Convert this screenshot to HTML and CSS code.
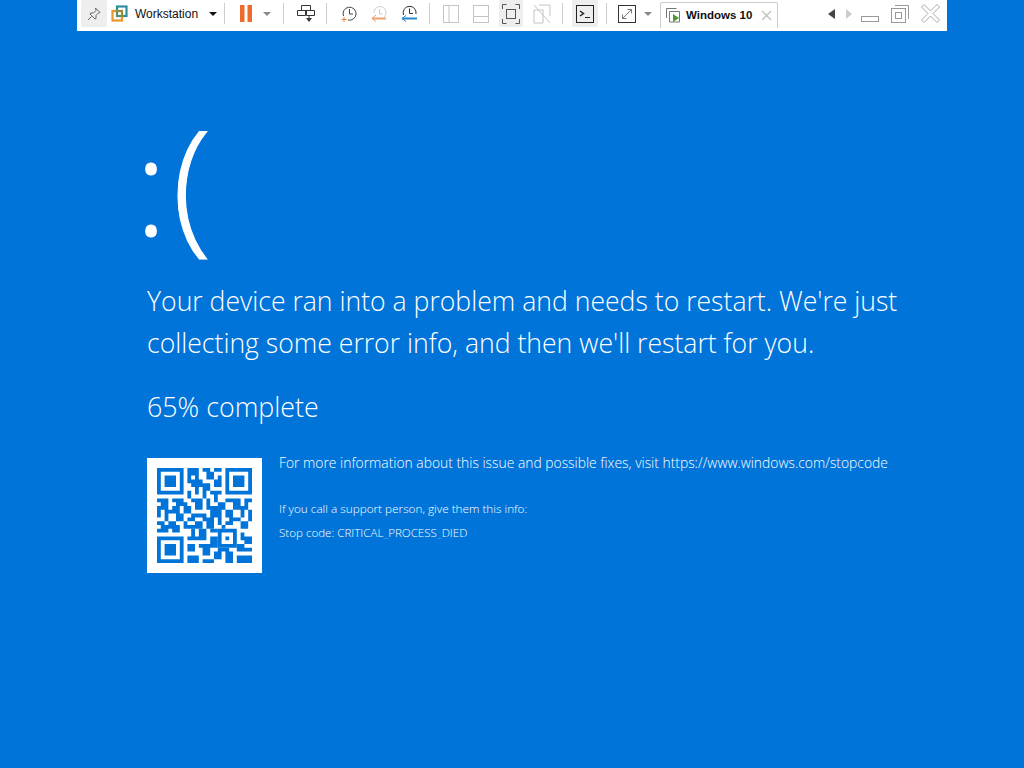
FILE: index.html
```html
<!DOCTYPE html>
<html lang="en">
<head>
<meta charset="UTF-8">
<meta name="viewport" content="width=device-width, initial-scale=1.0">
<title>Windows 10</title>
<link rel="stylesheet" href="styles.css">
</head>
<body>
    <header class="toolbar">
        <span class="pin-btn">
            <svg width="16" height="16" viewBox="0 0 16 16" fill="none" stroke="#666"><path d="M9.5 2l4.500 4.500-1.500.5-2.500 2.500v3l-1 .5-5-5 .5-1h3l2.500-2.500z"/><path d="M5.500 10.500l-3.500 3.500"/></svg>
        </span>
        <svg class="logo" width="17" height="17" viewBox="0 0 17 17" fill="none" stroke-width="2.200"><rect x="6" y="1.500" width="9.500" height="9.500" stroke="#2f8f9f"/><rect x="1.500" y="6" width="9.500" height="9.500" stroke="#e8972e"/><rect x="6" y="6" width="5" height="5" stroke="#6f8f4f" stroke-width="1.500"/></svg>
        <span class="label">Workstation</span>
        <i class="caret dark label-caret"></i>
        <i class="sep first-sep"></i>
        <svg class="pause" width="12" height="17" viewBox="0 0 12 17" fill="#ee6c2b"><rect width="4.500" height="17"/><rect x="7.500" width="4.500" height="17"/></svg>
        <i class="caret pause-caret"></i>
        <i class="sep"></i>
        <svg class="icon wide" width="18" height="20" viewBox="0 0 18 20" fill="none" stroke="#333"><path d="M4.500 1.500h9v5h-9zM.5 6.500h8v5h-8zM9.500 6.500h8v5h-8z" fill="#fff"/><path d="M12 12v2" /><path d="M9 14h6l-3 4z" fill="#333" stroke="none"/></svg>
        <i class="sep"></i>
        <div class="group clocks">
            <svg class="icon" width="17" height="18" viewBox="0 0 17 18" fill="none" stroke="#444"><path d="M3.500 11A6.500 6.500 0 1 1 8 15"/><path d="M9.500 4v5h3.500"/><path d="M4 12v5M1.500 14.500h5" stroke="#e8803a"/></svg>
            <svg class="icon" width="17" height="18" viewBox="0 0 17 18" fill="none" stroke="#ccc"><path d="M3 8a6 6 0 1 1 10 4"/><path d="M8.500 4v5h3"/><path d="M1 13.500h14" stroke="#f0a070" stroke-width="2"/><path d="M5 10l-4 3.500 4 3" stroke="#f0a070"/></svg>
            <svg class="icon" width="17" height="18" viewBox="0 0 17 18" fill="none" stroke="#333"><path d="M2.500 10A6.500 6.500 0 1 1 15 9"/><path d="M8.500 3.500v5h3.500"/><path d="M1 13.500h15" stroke="#2a86c8" stroke-width="2"/><path d="M5 10.500l-4 3 4 3" stroke="#2a86c8"/></svg>
        </div>
        <i class="sep"></i>
        <div class="group">
            <svg class="icon" width="16" height="18" viewBox="0 0 16 18" fill="none" stroke="#c4c4c4"><rect x=".5" y=".5" width="15" height="17"/><path d="M6 .5v17"/></svg>
            <svg class="icon" width="16" height="18" viewBox="0 0 16 18" fill="none" stroke="#c4c4c4"><rect x=".5" y=".5" width="15" height="17"/><path d="M.5 11.500h15"/></svg>
            <span class="icon-btn focus-btn">
                <svg width="18" height="20" viewBox="0 0 18 20" fill="none" stroke="#555"><rect x="4.500" y="5.500" width="9" height="9"/><path d="M.5 5V.5h4M13.500.5h4V5M17.500 15v4.500h-4M4.500 19.500h-4V15"/></svg>
            </span>
            <svg class="icon" width="18" height="20" viewBox="0 0 18 20" fill="none" stroke="#c4c4c4"><path d="M6 1h11v11M1 6h9v13H1zM1 1l16 18"/></svg>
        </div>
        <i class="sep"></i>
        <span class="icon-btn term-btn">
            <svg width="18" height="18" viewBox="0 0 18 18" fill="none" stroke="#222"><rect x=".5" y=".5" width="17" height="17"/><path d="M4 6l3.500 2.500L4 11" stroke-width="1.500"/><path d="M9 12.500h5"/></svg>
        </span>
        <i class="sep term-sep"></i>
        <svg class="icon wide" width="18" height="18" viewBox="0 0 18 18" fill="none" stroke="#333"><rect x=".5" y=".5" width="17" height="17"/><path d="M4.500 13.500l9-9M9.500 4.500h4v4M4.500 9.500v4h4" stroke="#777"/></svg>
        <i class="caret full-caret"></i>
        <div class="tab">
            <svg width="15" height="15" viewBox="0 0 15 15" fill="none" stroke="#777"><path d="M.5 10V.5h10"/><path d="M3.500 14V3.500h10V14z" fill="#fff"/><path d="M7 6l6 4-6 4z" fill="#4e9a2e" stroke="none"/></svg>
            <b class="tab-name">Windows 10</b>
            <svg class="tab-close" width="11" height="11" viewBox="0 0 11 11" stroke="#c4c4c4" stroke-width="1.500"><path d="M1 1l9 9M10 1l-9 9"/></svg>
        </div>
        <div class="tab-nav">
            <i class="arrow left"></i>
            <i class="arrow right"></i>
        </div>
        <div class="win-btns">
            <svg width="18" height="6" viewBox="0 0 18 6" fill="none" stroke="#999" class="min-btn"><rect x=".5" y=".5" width="17" height="5"/></svg>
            <svg width="18" height="18" viewBox="0 0 18 18" fill="none" stroke="#999"><path d="M4 .5h13.500V14"/><rect x=".5" y="3.500" width="14" height="14"/><rect x="4.500" y="7.500" width="6" height="6"/></svg>
            <svg width="19" height="19" viewBox="0 0 19 19" fill="#fff" stroke="#aaa"><path d="M.5 3L3 .5l6.500 6.500L16 .5 18.500 3 12 9.500l6.500 6.500-2.500 2.500L9.500 12 3 18.500.5 16 7 9.500z"/></svg>
        </div>
    </header>

    <main class="screen">
        <div class="face"><span class="colon">:</span><span class="paren">(</span></div>
        <p class="headline">Your device ran into a problem and needs to restart. We're just<br>collecting some error info, and then we'll restart for you.</p>
        <p class="progress">65% complete</p>
        <div class="details">
            <div class="qr">
                <svg width="95" height="95" viewBox="0 0 25 25" fill="#0074d9">
                    <path d="M0 0h7v7h-7zM1 1v5h5v-5zM2 2h3v3h-3z" fill-rule="evenodd"/>
                    <path d="M18 0h7v7h-7zM19 1v5h5v-5zM20 2h3v3h-3z" fill-rule="evenodd"/>
                    <path d="M0 18h7v7h-7zM1 19v5h5v-5zM2 20h3v3h-3z" fill-rule="evenodd"/>
                    <path d="M16 16h5v5h-5zM17 17v3h3v-3zM18 18h1v1h-1z" fill-rule="evenodd"/>
                    <path d="M8 0h3v2h-3zM12 0h2v1h-2zM15 0h2v1h-2zM8 2h1v2h-1zM10 2h1v1h-1zM13 1h2v2h-2zM16 2h1v3h-1zM9 3h3v2h-3zM12 4h2v2h-2zM15 3h1v2h-1zM10 5h1v2h-1zM8 6h1v2h-1zM12 6h1v2h-1zM14 6h3v1h-3zM15 7h1v2h-1z"/>
                    <path d="M0 8h3v1h-3zM4 8h3v1h-3zM9 8h3v1h-3zM13 8h1v2h-1zM18 8h4v1h-4zM23 8h2v1h-2zM1 9h2v2h-2zM5 9h3v1h-3zM10 9h2v2h-2zM16 9h2v2h-2zM20 9h2v2h-2zM23 9h1v2h-1zM0 10h1v3h-1zM4 10h2v2h-2zM7 10h2v2h-2zM13 10h3v1h-3zM18 11h2v2h-2zM22 10h1v3h-1zM2 11h2v1h-2zM9 12h4v1h-4zM14 11h3v2h-3zM24 11h1v3h-1zM2 12h1v2h-1zM5 12h2v2h-2zM8 13h2v1h-2zM12 13h3v1h-3zM16 13h1v2h-1zM19 13h3v1h-3zM0 14h2v1h-2zM3 14h2v1h-2zM7 14h1v2h-1zM10 14h2v2h-2zM13 14h2v2h-2zM18 14h2v1h-2zM22 14h2v2h-2zM1 15h5v1h-5zM8 15h2v1h-2zM17 15h1v1h-1zM0 16h3v1h-3zM4 16h2v1h-2z"/>
                    <path d="M9 16h1v2h-1zM11 16h2v3h-2zM14 16h2v1h-2zM22 17h1v2h-1zM8 18h3v1h-3zM14 18h2v3h-2zM23 18h2v2h-2zM8 20h2v2h-2zM11 20h3v1h-3zM21 20h2v2h-2zM12 21h2v2h-2zM16 21h3v1h-3zM23 21h2v1h-2zM8 23h3v2h-3zM15 22h2v2h-2zM18 22h2v1h-2zM21 23h4v2h-4zM12 24h3v1h-3zM18 23h2v2h-2z"/>
                </svg>
            </div>
            <div class="info">
                <p class="more">For more information about this issue and possible fixes, visit https://www.windows.com/stopcode</p>
                <p class="support">If you call a support person, give them this info:</p>
                <p class="stop">Stop code: CRITICAL<span class="faint">_</span>PROCESS<span class="faint">_</span>DIED</p>
            </div>
        </div>
    </main>
</body>
</html>
```

FILE: styles.css
```css
body {
    margin: 0;
    height: 768px;
    overflow: hidden;
    background: #0074d9;
    color: #fff;
    font-family: "Open Sans", "Liberation Sans", sans-serif;
    font-weight: 300;
}
p {
    margin: 0;
}

/* vmware toolbar */
.toolbar {
    display: flex;
    align-items: center;
    width: 866px;
    height: 27px;
    margin-left: 77px;
    padding: 0 0 4px 4px;
    background: #fff;
    color: #111;
    font-family: "Liberation Sans", sans-serif;
    font-weight: 400;
}
.toolbar svg {
    flex: none;
    display: block;
}
.pin-btn {
    display: flex;
    align-items: center;
    justify-content: center;
    width: 26px;
    height: 27px;
    background: #eee;
    border-radius: 2px;
}
.logo {
    margin-left: 4px;
}
.label {
    margin-left: 7px;
    width: 63px;
    font-size: 12px;
}
.caret {
    flex: none;
    width: 0;
    height: 0;
    border-left: 4px solid transparent;
    border-right: 4px solid transparent;
    border-top: 4px solid #888;
}
.caret.dark {
    border-top-color: #111;
}
.label-caret {
    margin-left: 11px;
}
.sep {
    flex: none;
    width: 1px;
    height: 21px;
    margin: 0 13px 0 11px;
    background: #ccc;
}
.first-sep {
    margin: 0 15px 0 7px;
}
.pause-caret {
    margin: 0 1px 0 11px;
}
.group {
    display: flex;
    align-items: center;
    gap: 14px;
}
.clocks {
    gap: 13.5px;
}
.icon-btn {
    display: flex;
    align-items: center;
    justify-content: center;
    height: 27px;
    background: #eee;
    border-radius: 2px;
}
.focus-btn {
    width: 24px;
    margin: 0 -4px;
}
.term-btn {
    width: 26px;
    margin-left: -4px;
}
.term-sep {
    margin: 0 11px 0 8px;
}
.full-caret {
    margin-left: 8px;
}
.tab {
    display: flex;
    align-items: center;
    width: 106px;
    height: 25px;
    margin: 2px 0 0 8px;
    padding: 0 5px;
    border: 1px solid #ccc;
    border-bottom: 0;
    border-radius: 2px 2px 0 0;
}
.tab-name {
    margin-left: 5px;
    font-size: 11.5px;
    white-space: nowrap;
}
.tab-close {
    margin-left: auto;
}
.tab-nav {
    display: flex;
    align-items: center;
    gap: 11px;
    margin-left: 50px;
}
.arrow {
    width: 0;
    height: 0;
    border-top: 5px solid transparent;
    border-bottom: 5px solid transparent;
}
.arrow.left {
    border-right: 7px solid #444;
}
.arrow.right {
    border-left: 6px solid #ccc;
}
.win-btns {
    display: flex;
    align-items: center;
    gap: 12px;
    margin-left: 9px;
}
.min-btn {
    margin-top: 10px;
}

/* blue screen */
.screen {
    padding-left: 147px;
}
.face {
    display: flex;
    align-items: baseline;
    height: 142px;
    margin-top: 78px;
    line-height: 142px;
    -webkit-text-stroke: 1px #fff;
}
.colon {
    margin-left: -12px;
    font-size: 134px;
}
.paren {
    margin-left: 5px;
    font-size: 146px;
}
.headline {
    margin-top: 29px;
    font-size: 26.6px;
    line-height: 42px;
    white-space: nowrap;
}
.progress {
    margin-top: 22px;
    font-size: 26.8px;
    line-height: 42px;
}
.details {
    display: flex;
    margin-top: 30px;
}
.qr {
    flex: none;
    display: flex;
    align-items: center;
    justify-content: center;
    width: 115px;
    height: 115px;
    background: #fff;
}
.info {
    margin-left: 17px;
}
.more {
    margin-top: -5px;
    font-size: 13.86px;
    line-height: 20px;
}
.support {
    margin-top: 25px;
    font-size: 11.75px;
    line-height: 20px;
}
.stop {
    margin-top: 5px;
    font-size: 11.6px;
    line-height: 20px;
}
.faint {
    opacity: .35;
}
```
